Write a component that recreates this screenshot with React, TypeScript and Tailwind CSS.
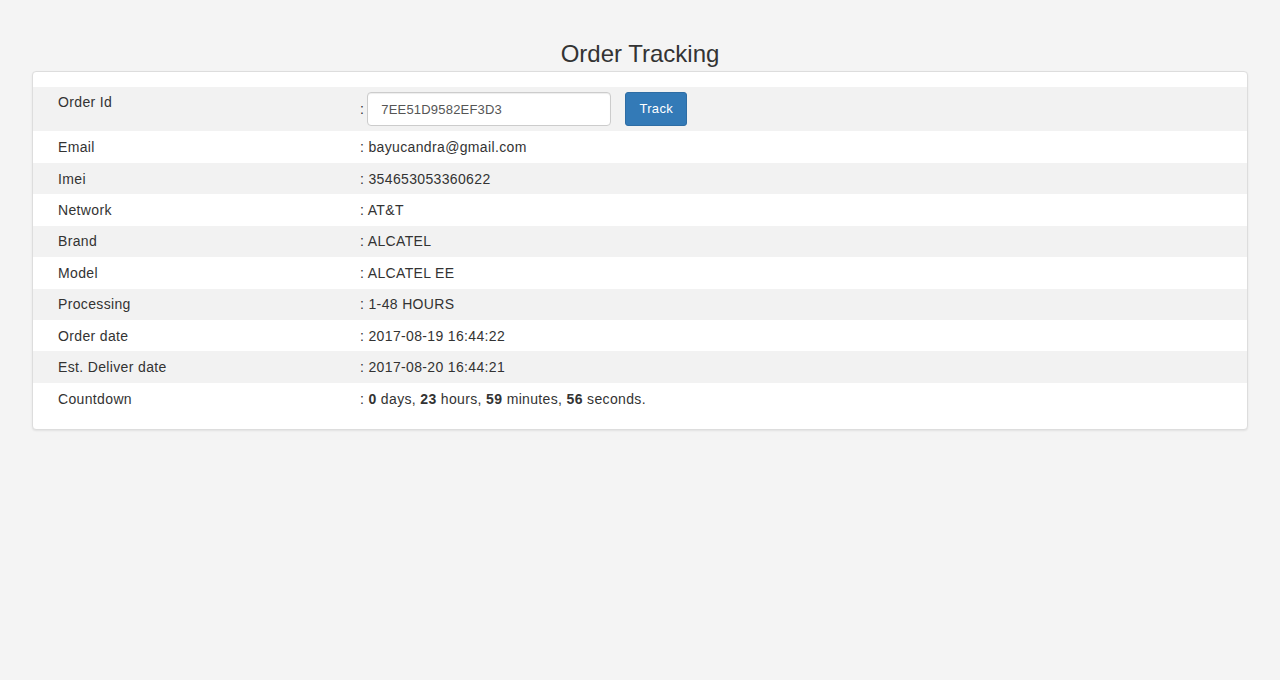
import React from "react";

const rows: { label: string; value: React.ReactNode }[] = [
  { label: "Email", value: "bayucandra@gmail.com" },
  { label: "Imei", value: "354653053360622" },
  { label: "Network", value: "AT&T" },
  { label: "Brand", value: "ALCATEL" },
  { label: "Model", value: "ALCATEL EE" },
  { label: "Processing", value: "1-48 HOURS" },
  { label: "Order date", value: "2017-08-19 16:44:22" },
  { label: "Est. Deliver date", value: "2017-08-20 16:44:21" },
  {
    label: "Countdown",
    value: (
      <>
        <b>0</b> days, <b>23</b> hours, <b>59</b> minutes, <b>56</b> seconds.
      </>
    ),
  },
];

export default function App() {
  return (
    <div
      className="min-h-[680px] bg-[#f4f4f4] text-[#333] text-[14px] px-[32px]"
      style={{ fontFamily: '"Liberation Sans", Arial, sans-serif' }}
    >
      <h1 className="pt-[41px] mb-[4px] text-center text-[24px] leading-[1.1] font-normal">
        Order Tracking
      </h1>
      <div className="bg-white border border-[#ddd] rounded-[4px] shadow-[0_1px_2px_rgba(0,0,0,0.08)] py-[15px] tracking-[0.35px]">
        <div className="flex bg-[#f2f2f2] h-[44px]">
          <div className="w-[327px] pl-[25px] pt-[5px] leading-5">Order Id</div>
          <div className="flex-1 pt-[5px] leading-5">
            <span>:</span>
            <input
              readOnly
              value="7EE51D9582EF3D3"
              className="inline-block align-baseline ml-[3px] w-[244px] h-[34px] px-[13px] border border-[#ccc] rounded-[4px] bg-white text-[#555] text-[13px] tracking-[0.2px] outline-none shadow-[inset_0_1px_1px_rgba(0,0,0,0.075)]"
              style={{ fontFamily: '"Liberation Sans", Arial, sans-serif' }}
            />
            <button
              className="inline-block align-top ml-[14px] h-[34px] w-[62px] bg-[#337ab7] border border-[#2e6da4] rounded-[3px] text-white text-[13px] tracking-[0.3px]"
              style={{ fontFamily: '"Liberation Sans", Arial, sans-serif' }}
            >
              Track
            </button>
          </div>
        </div>
        {rows.map((r, i) => (
          <div
            key={r.label}
            className={`flex items-center h-[31.44px] leading-5 ${i % 2 === 1 ? "bg-[#f2f2f2]" : "bg-white"}`}
          >
            <div className="w-[327px] pl-[25px]">{r.label}</div>
            <div className="flex-1">: {r.value}</div>
          </div>
        ))}
      </div>
    </div>
  );
}
